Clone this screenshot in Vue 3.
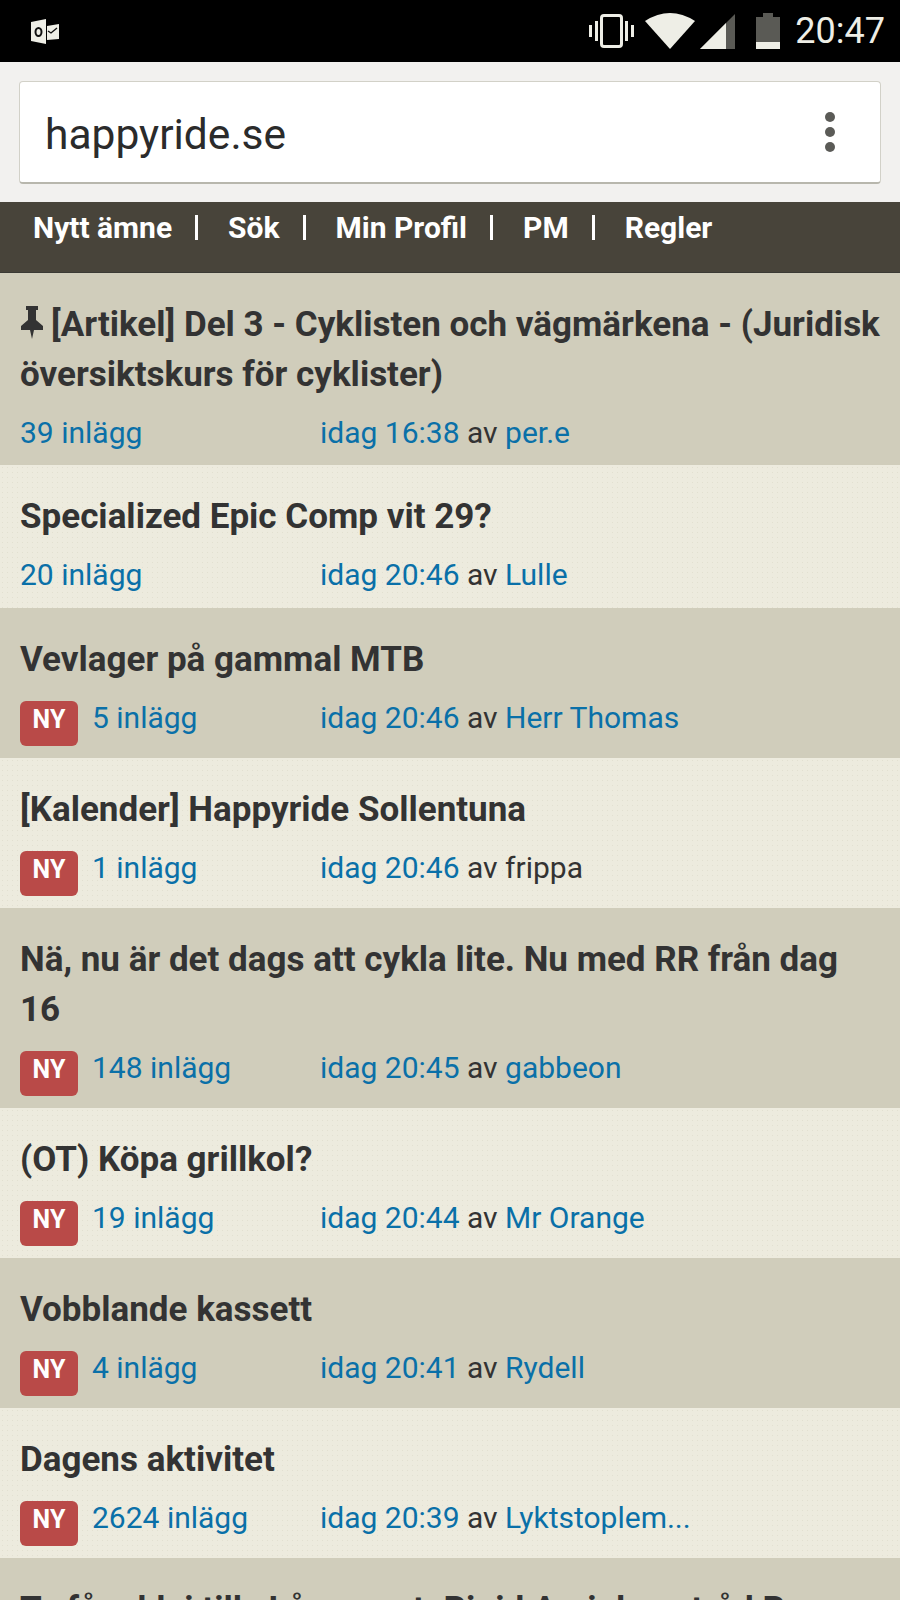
<template>
  <div class="page">
    <div class="status">
      <svg class="outlook" width="28" height="25" viewBox="0 0 28 25">
        <path d="M0 3 L15 0 L15 25 L0 22 Z" fill="#eeeee6" />
        <path d="M16 7 L28 5 L28 20 L16 21 Z" fill="#eeeee6" />
        <ellipse cx="7.5" cy="13" rx="3" ry="4" fill="none" stroke="#111" stroke-width="2" />
        <path d="M17 12 L20 14 L26 9" fill="none" stroke="#111" stroke-width="1.4" />
      </svg>
      <div class="status-right">
        <svg width="46" height="34" viewBox="0 0 46 34">
          <rect x="12.5" y="1.5" width="20" height="31" rx="2.5" fill="none" stroke="#eeeee6" stroke-width="3" />
          <rect x="0" y="11" width="3" height="12" fill="#eeeee6" />
          <rect x="6" y="7" width="3" height="20" fill="#eeeee6" />
          <rect x="36" y="7" width="3" height="20" fill="#eeeee6" />
          <rect x="42" y="11" width="3" height="12" fill="#eeeee6" />
        </svg>
        <svg class="wifi" width="50" height="36" viewBox="0 0 50 36">
          <path d="M0 8 Q25 -8 50 8 L25 36 Z" fill="#eeeee6" />
        </svg>
        <svg class="signal" width="35" height="35" viewBox="0 0 35 35">
          <path d="M0 35 L35 0 L35 35 Z" fill="#5a5a55" />
          <path d="M0 35 L26 9 L26 35 Z" fill="#eeeee6" />
        </svg>
        <svg class="battery" width="24" height="36" viewBox="0 0 24 36">
          <path d="M0 4 L7 4 L7 0 L17 0 L17 4 L24 4 L24 36 L0 36 Z" fill="#5a5a55" />
          <rect x="0" y="29" width="24" height="7" fill="#eeeee6" />
        </svg>
        <span class="clock">20:47</span>
      </div>
    </div>

    <div class="chrome">
      <div class="urlbar">
        <span class="url">happyride.se</span>
        <div class="dots"><i></i><i></i><i></i></div>
      </div>
    </div>

    <nav class="nav">
      <template v-for="(item, i) in navItems" :key="item">
        <a>{{ item }}</a>
        <span v-if="i < navItems.length - 1" class="sep"></span>
      </template>
    </nav>

    <div
      v-for="(t, i) in topics"
      :key="t.title"
      class="topic"
      :class="[i % 2 === 0 ? 'dark' : 'light', { pinned: t.pinned }]"
    >
      <h3>
        <svg v-if="t.pinned" class="pin" width="24" height="33" viewBox="0 0 24 33">
          <path d="M6 0 L18 0 L18 4 L16 4 L16 14 L23 20 L23 24 L14 24 L12 33 L10 24 L1 24 L1 20 L8 14 L8 4 L6 4 Z" fill="#333" />
        </svg>{{ t.title }}
      </h3>
      <div v-if="t.posts" class="meta">
        <div class="count">
          <span v-if="t.isNew" class="badge">NY</span>
          <a>{{ t.posts }} inlägg</a>
        </div>
        <div class="last">
          <a>{{ t.time }}</a> av <a v-if="t.linked !== false">{{ t.author }}</a><template v-else>{{ t.author }}</template>
        </div>
      </div>
    </div>
  </div>
</template>

<script setup>
const navItems = ['Nytt ämne', 'Sök', 'Min Profil', 'PM', 'Regler']

const topics = [
  { title: '[Artikel] Del 3 - Cyklisten och vägmärkena - (Juridisk översiktskurs för cyklister)', pinned: true, posts: 39, time: 'idag 16:38', author: 'per.e' },
  { title: 'Specialized Epic Comp vit 29?', posts: 20, time: 'idag 20:46', author: 'Lulle' },
  { title: 'Vevlager på gammal MTB', isNew: true, posts: 5, time: 'idag 20:46', author: 'Herr Thomas' },
  { title: '[Kalender] Happyride Sollentuna', isNew: true, posts: 1, time: 'idag 20:46', author: 'frippa', linked: false },
  { title: 'Nä, nu är det dags att cykla lite. Nu med RR från dag 16', isNew: true, posts: 148, time: 'idag 20:45', author: 'gabbeon' },
  { title: '(OT) Köpa grillkol?', isNew: true, posts: 19, time: 'idag 20:44', author: 'Mr Orange' },
  { title: 'Vobblande kassett', isNew: true, posts: 4, time: 'idag 20:41', author: 'Rydell' },
  { title: 'Dagens aktivitet', isNew: true, posts: 2624, time: 'idag 20:39', author: 'Lyktstoplem...' },
  { title: 'Ta fåra klei tills Långsamt. Rigid Arvinkapstråd R' }
]
</script>

<style>
html, body {
  margin: 0;
  overflow: hidden;
}
</style>

<style scoped>
.page {
  width: 900px;
  height: 1600px;
  overflow: hidden;
  font-family: Roboto, "Liberation Sans", sans-serif;
  color: #333;
  background: #ecebdf;
}

.status {
  height: 62px;
  background: #000;
  display: flex;
  align-items: center;
  justify-content: space-between;
  padding: 0 15px 0 31px;
  box-sizing: border-box;
}

.status-right {
  display: flex;
  align-items: center;
}

.wifi {
  margin-left: 10px;
}

.signal {
  margin-left: 5px;
}

.battery {
  margin-left: 21px;
}

.clock {
  margin-left: 15px;
  color: #eeeee6;
  font-size: 36px;
}

.chrome {
  height: 140px;
  box-sizing: border-box;
  padding: 19px 19px 18px;
  background: #f2f1ef;
}

.urlbar {
  height: 103px;
  box-sizing: border-box;
  background: #fff;
  border: 1px solid #d2d1c8;
  border-bottom: 2px solid #b8b7ad;
  border-radius: 4px;
  display: flex;
  align-items: center;
  justify-content: space-between;
  padding: 0 45px 0 25px;
}

.url {
  font-size: 42.5px;
  color: #2b2b2b;
  padding-top: 5px;
}

.dots {
  display: flex;
  flex-direction: column;
  gap: 5px;
}

.dots i {
  width: 10px;
  height: 10px;
  border-radius: 50%;
  background: #5b5b57;
}

.nav {
  height: 71px;
  box-sizing: border-box;
  padding: 9px 0 0 33px;
  background: #48443a;
  border-bottom: 1px solid #3a3a34;
  display: flex;
  align-items: flex-start;
  color: #fff;
  font-size: 30px;
  font-weight: 700;
  line-height: 34px;
}

.sep {
  width: 3px;
  height: 25px;
  margin: 4px 30px 0 23px;
  background: #fff;
}

.topic {
  padding: 27px 18px 10px 20px;
  box-sizing: border-box;
}

.topic.pinned {
  padding-bottom: 9px;
}

.dark {
  background: #d0cdbb;
}

.light {
  background-color: #edebde;
  background-image: radial-gradient(#e2e0d0 0.7px, transparent 1px);
  background-size: 5px 5px;
}

h3 {
  margin: 0;
  font-size: 35px;
  line-height: 50px;
  font-weight: 700;
  color: #333;
}

.pin {
  margin-right: 7px;
  vertical-align: -3px;
}

.meta {
  display: flex;
  align-items: flex-start;
  margin-top: 10px;
  font-size: 30px;
  line-height: 46px;
}

.count {
  width: 300px;
  display: flex;
  align-items: flex-start;
}

.badge {
  width: 58px;
  height: 45px;
  margin: 6px 14px 2px 0;
  border-radius: 6px;
  background: #b94a48;
  color: #fff;
  font-size: 25px;
  line-height: 38px;
  font-weight: 700;
  text-align: center;
}

a {
  color: #0a70a8;
}

.nav a {
  color: #fff;
}

.last {
  white-space: nowrap;
}
</style>
